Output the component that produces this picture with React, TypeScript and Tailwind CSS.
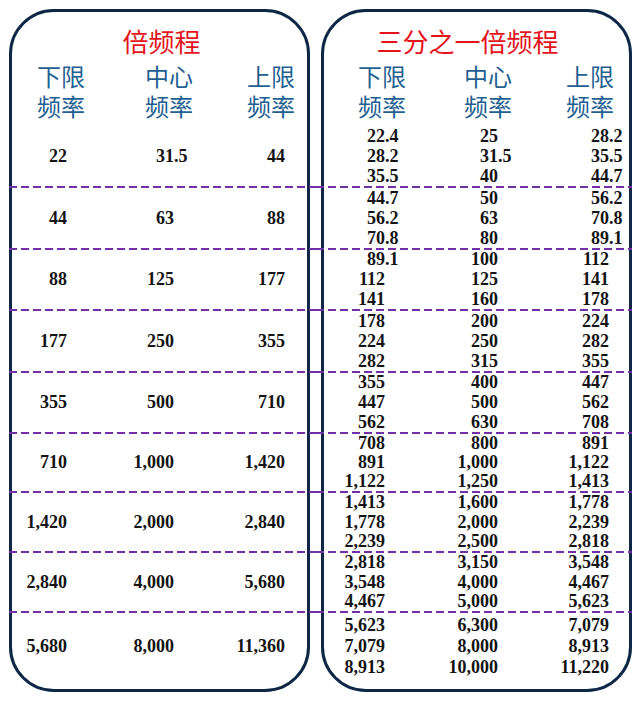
import React from 'react'

type Row = [string, string, string]

const octave: Row[] = [
  ['22', '31.5', '44'],
  ['44', '63', '88'],
  ['88', '125', '177'],
  ['177', '250', '355'],
  ['355', '500', '710'],
  ['710', '1,000', '1,420'],
  ['1,420', '2,000', '2,840'],
  ['2,840', '4,000', '5,680'],
  ['5,680', '8,000', '11,360'],
]

const third: Row[] = [
  ['22.4', '25', '28.2'],
  ['28.2', '31.5', '35.5'],
  ['35.5', '40', '44.7'],
  ['44.7', '50', '56.2'],
  ['56.2', '63', '70.8'],
  ['70.8', '80', '89.1'],
  ['89.1', '100', '112'],
  ['112', '125', '141'],
  ['141', '160', '178'],
  ['178', '200', '224'],
  ['224', '250', '282'],
  ['282', '315', '355'],
  ['355', '400', '447'],
  ['447', '500', '562'],
  ['562', '630', '708'],
  ['708', '800', '891'],
  ['891', '1,000', '1,122'],
  ['1,122', '1,250', '1,413'],
  ['1,413', '1,600', '1,778'],
  ['1,778', '2,000', '2,239'],
  ['2,239', '2,500', '2,818'],
  ['2,818', '3,150', '3,548'],
  ['3,548', '4,000', '4,467'],
  ['4,467', '5,000', '5,623'],
  ['5,623', '6,300', '7,079'],
  ['7,079', '8,000', '8,913'],
  ['8,913', '10,000', '11,220'],
]

// heights of the bands between dashed lines (bands 2..8)
const bandH = ['h-[60px]', 'h-[59px]', 'h-[60px]', 'h-[59px]', 'h-[57px]', 'h-[58px]', 'h-[58px]']

const intW = {
  left: ['w-[55px]', 'w-[87px]', 'w-[91px]'],
  right: ['w-[61px]', 'w-[93px]', 'w-[91px]'],
}

type Side = 'left' | 'right'

const NumRow = ({ vals, side }: { vals?: Row; side: Side }) => (
  <div className="flex items-center">
    {vals?.map((v, i) => {
      const [a, b] = v.split('.')
      return (
        <React.Fragment key={i}>
          <span className={`${intW[side][i]} shrink-0 text-right`}>{a}</span>
          <span className="w-[20px] shrink-0 text-left">{b ? '.' + b : ''}</span>
        </React.Fragment>
      )
    })}
  </div>
)

const Dash = ({ side }: { side: Side }) => (
  <div
    className={`h-[2px] shrink-0 bg-[repeating-linear-gradient(90deg,#7330a6_0px,#7330a6_8px,transparent_8px,transparent_12px)] ${
      side === 'left' ? '-ml-[3px] -mr-[9px]' : '-ml-[8px] -mr-[3px]'
    }`}
  />
)

// one band = three text rows; the octave box only fills the middle one
const Band = ({ rows, side, h }: { rows: (Row | undefined)[]; side: Side; h: string }) => (
  <div className={`grid grid-rows-3 ${h}`}>
    {rows.map((r, i) => (
      <NumRow key={i} vals={r} side={side} />
    ))}
  </div>
)

const Header = ({ side }: { side: Side }) => {
  const ml = side === 'left' ? ['ml-[25px]', 'ml-[60px]', 'ml-[54px]'] : ['ml-[34px]', 'ml-[58px]', 'ml-[54px]']
  const labels = [
    ['下限', '频率'],
    ['中心', '频率'],
    ['上限', '频率'],
  ]
  return (
    <div className="mt-[5px] flex text-[24px] leading-[30px] text-[#1f5f91]">
      {labels.map((l, i) => (
        <div key={i} className={`${ml[i]} w-[48px] shrink-0 text-center`}>
          <div>{l[0]}</div>
          <div>{l[1]}</div>
        </div>
      ))}
    </div>
  )
}

const Box = ({ side, title }: { side: Side; title: string }) => {
  const rowsFor = (band: number): (Row | undefined)[] =>
    side === 'left' ? [undefined, octave[band], undefined] : [third[band * 3], third[band * 3 + 1], third[band * 3 + 2]]

  return (
    <div
      className={`flex h-[683px] shrink-0 flex-col rounded-[45px] border-[3px] border-[#0f2746] ${
        side === 'left' ? 'w-[301px]' : 'w-[311px]'
      }`}
    >
      <div
        className={`pt-[14px] text-center text-[26px] leading-[30px] text-[#e3141b] ${
          side === 'left' ? 'pl-[4px]' : 'pr-[18px]'
        }`}
      >
        {title}
      </div>
      <Header side={side} />

      <div className="font-['Liberation_Serif',serif] text-[18px] font-bold text-[#141414]">
        <div className="mt-[5px]">
          <Band rows={rowsFor(0)} side={side} h="h-[60px]" />
        </div>
        {bandH.map((h, i) => (
          <React.Fragment key={i}>
            <Dash side={side} />
            <Band rows={rowsFor(i + 1)} side={side} h={h} />
          </React.Fragment>
        ))}
        <Dash side={side} />
        <div className="pt-[2px]">
          <Band rows={rowsFor(8)} side={side} h="h-[63px]" />
        </div>
      </div>
    </div>
  )
}

export default function App() {
  return (
    <div className="h-[702px] w-[640px] overflow-hidden bg-white pl-[9px] pt-[9px] font-['Noto_Sans_CJK_SC','Noto_Sans',sans-serif]">
      <div className="flex gap-[11px]">
        <Box side="left" title="倍频程" />
        <Box side="right" title="三分之一倍频程" />
      </div>
    </div>
  )
}
